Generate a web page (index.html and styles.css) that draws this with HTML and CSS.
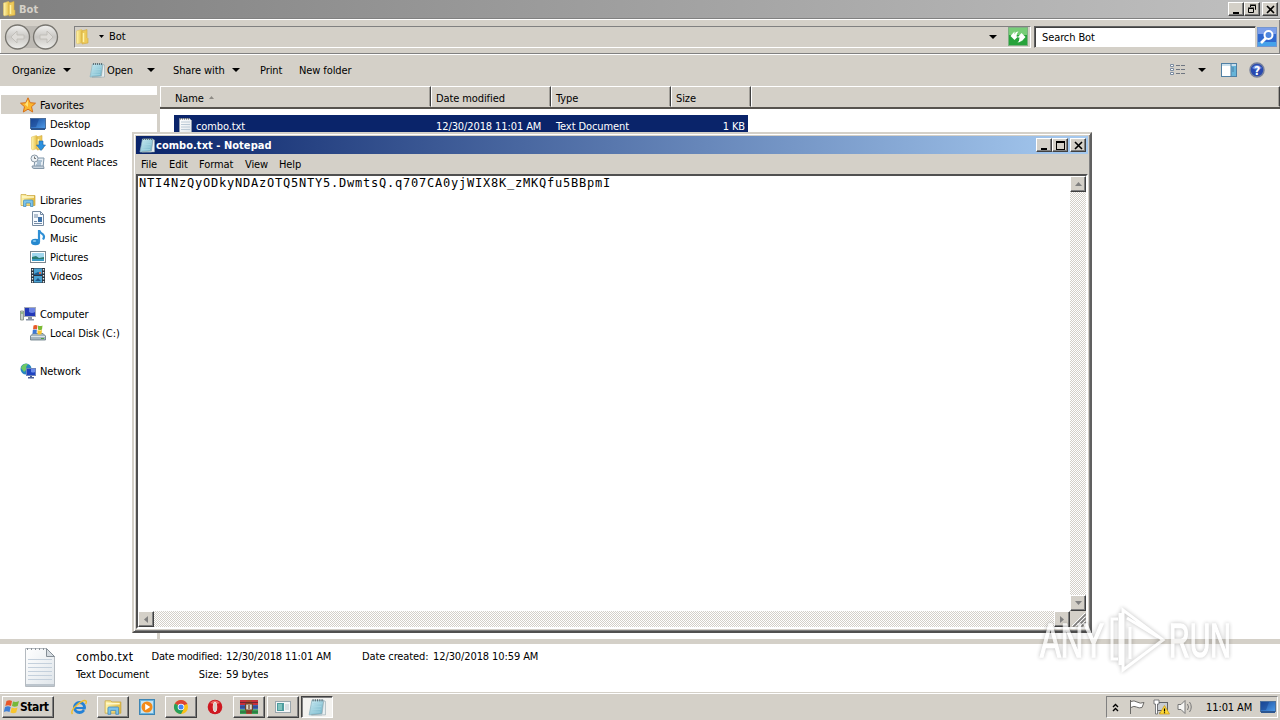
FILE: index.html
```
<!DOCTYPE html>
<html lang="en">
<head>
    <meta charset="UTF-8">
    <meta name="viewport" content="width=device-width, initial-scale=1.0">
    <title>Bot</title>
    <link rel="stylesheet" href="styles.css">
</head>
<body>
    <!-- shared icons -->
    <svg class="defs" width="0" height="0">
        <defs>
            <linearGradient id="gold" x1="0" x2="1"><stop offset="0" stop-color="#fff6b0"/><stop offset="1" stop-color="#e2b93c"/></linearGradient>
            <linearGradient id="screen" x1="0" y1="0" x2="1" y2="1"><stop offset="0" stop-color="#174a9c"/><stop offset="1" stop-color="#4f9be8"/></linearGradient>
            <linearGradient id="paper" x1="0" y1="0" x2="1" y2="1"><stop offset="0" stop-color="#fff"/><stop offset="1" stop-color="#dfe5ea"/></linearGradient>
            <linearGradient id="pad" x1="0" y1="0" x2="1" y2="1"><stop offset="0" stop-color="#d3f0f6"/><stop offset="1" stop-color="#67aec4"/></linearGradient>
            <linearGradient id="round" x1="0" y1="0" x2="0" y2="1"><stop offset="0" stop-color="#f2f2f0"/><stop offset=".5" stop-color="#c9c7c3"/><stop offset="1" stop-color="#efefec"/></linearGradient>
            <symbol id="folder" viewBox="0 0 16 16">
                <path d="M1.500 2l5-1.500 1 1v12l-5 1.500-1-1z" fill="url(#gold)" stroke="#e3c564" stroke-width=".6"/>
                <path d="M7 2l5-1.500v8l1 1v4.500l-6 1z" fill="#edca5b" stroke="#d0a83f" stroke-width=".6"/>
                <path d="M8.500 4v9" stroke="#fff3a5" stroke-width="1.500"/>
            </symbol>
            <symbol id="notepad" viewBox="0 0 16 16">
                <path d="M3.500 2H14l-1.500 13H1z" fill="url(#pad)" stroke="#8fb4c0" stroke-width=".7"/>
                <path d="M14 2.500l1.500.5v12H3l9.500-1z" fill="#e8f0f2" stroke="#8a9ea5" stroke-width=".5"/>
                <path d="M4 5h8M3.500 7.500h8.200M3 10h8.200M3 12.500h8" stroke="#a9d8e4" stroke-width=".7"/>
                <path d="M4.500 1v2M6.500 1v2M8.500 1v2M10.500 1v2M12.500 1v2" stroke="#4e5c63" stroke-width=".8"/>
            </symbol>
            <symbol id="explorer" viewBox="0 0 16 16">
                <path d="M1 2.500h5l1 1h8v10H1z" fill="url(#gold)" stroke="#c9a640" stroke-width=".7"/>
                <path d="M2 5h12" stroke="#fff8c9" stroke-width="1.500"/>
                <path d="M3.500 14.500V9q0-1 1-1h7.500q1 0 1 1v5.500h-2.500v-3.500H6v3.500z" fill="#7cc3ea" stroke="#4086b8" stroke-width=".7"/>
            </symbol>
            <symbol id="monitor" viewBox="0 0 16 16">
                <rect x=".5" y="2.500" width="15" height="10" fill="url(#screen)" stroke="#4c6f9c"/>
                <path d="M1 12h14v2H1z" fill="#2c5690"/><path d="M1 3h8l-3 8H1z" fill="#173f8b" opacity=".5"/>
            </symbol>
            <symbol id="txt" viewBox="0 0 16 16">
                <path d="M1.500.5h10l2 2v13h-12z" fill="url(#paper)" stroke="#9aa4ad" stroke-width=".6"/>
                <path d="M2 .8h10" stroke="#555" stroke-width="1.300" stroke-dasharray="1 1"/>
                <path d="M3 4h9M3 6.500h9M3 9h9M3 11.500h9" stroke="#bccad6"/>
            </symbol>
        </defs>
    </svg>

    <div class="explorer">
        <div class="title-bar inactive">
            <svg class="icon16"><use href="#folder"/></svg>
            <span class="title-text">Bot</span>
            <div class="win-buttons">
                <button class="win-btn"><svg width="13" height="11"><path d="M3 8h6v2H3z"/></svg></button>
                <button class="win-btn"><svg width="13" height="11" fill="none" stroke="#000"><path d="M4.500 3V1.500h5v4H9M4 1h6M2.500 4.500h5v4h-5zM2 4h6"/></svg></button>
                <button class="win-btn close"><svg width="13" height="11"><path d="M3 2l7 7M10 2l-7 7" stroke="#000" stroke-width="1.600"/></svg></button>
            </div>
        </div>

        <div class="address-row">
            <svg class="nav-buttons" width="62" height="30">
                <path d="M17 4h29q-10 11 0 22H17z" fill="#bdbab4"/>
                <g fill="url(#round)" stroke="#77756f" stroke-width="1.300">
                    <circle cx="15.500" cy="15" r="12"/><circle cx="43.500" cy="15" r="12"/>
                </g>
                <g fill="#dedcd8" stroke="#bebcb7" stroke-width=".9">
                    <path d="M9 15l6-6v4h7v4h-7v4z"/><path d="M51 15l-6-6v4h-7v4h7v4z"/>
                </g>
            </svg>
            <div class="address">
                <svg class="icon16"><use href="#folder"/></svg>
                <svg class="crumb-arrow" width="5" height="3"><path d="M0 0h5L2.500 3z"/></svg>
                <span>Bot</span>
                <svg class="drop" width="8" height="4"><path d="M0 0h8L4 4z"/></svg>
                <svg class="refresh" width="20" height="19">
                    <rect x=".5" y=".5" width="19" height="18" fill="#27a33b" stroke="#7eaf83"/>
                    <path d="M1 1h18v7H1z" fill="#77cd77"/>
                    <path d="M2.500 9l4-4.500v3q1-3 4-3-2 1.500-2 5h1.500L6.500 13z" fill="#fff"/>
                    <path d="M17.500 10l-4 4.500v-1q-1 2-4 2 2-1.500 2-5H9.500L13.500 6z" fill="#fff"/>
                </svg>
            </div>
            <div class="search">Search Bot</div>
            <svg class="search-btn" width="20" height="20">
                <rect x=".5" y=".5" width="19" height="19" fill="#2f68cf" stroke="#7596cf"/>
                <path d="M1 1h18v6H1z" fill="#7c9fe9"/><path d="M1 15h18v4H1z" fill="#46a2ea"/>
                <circle cx="11.500" cy="8" r="4" fill="#4d86df" stroke="#fff" stroke-width="2"/>
                <path d="M9 11l-5 5" stroke="#fff" stroke-width="2.600"/>
            </svg>
        </div>

        <div class="toolbar">
            <span class="tool organize">Organize</span>
            <svg class="drop d1" width="8" height="4"><path d="M0 0h8L4 4z"/></svg>
            <svg class="icon16"><use href="#notepad"/></svg>
            <span class="tool open">Open</span>
            <svg class="drop d2" width="8" height="4"><path d="M0 0h8L4 4z"/></svg>
            <span class="tool share">Share with</span>
            <svg class="drop d3" width="8" height="4"><path d="M0 0h8L4 4z"/></svg>
            <span class="tool print">Print</span>
            <span class="tool">New folder</span>
            <div class="view-tools">
                <svg width="16" height="14" fill="none">
                    <path d="M.5 1.500h3v2h-3zM.5 5.500h3v2h-3zM.5 9.500h3v2h-3z" fill="#fff" stroke="#7a8ba0"/>
                    <path d="M6 2.500h4M11 2.500h4M6 6.500h4M11 6.500h4M6 10.500h4M11 10.500h4" stroke="#6f7681"/>
                </svg>
                <svg width="8" height="4"><path d="M0 0h8L4 4z"/></svg>
                <svg width="16" height="14">
                    <rect x=".5" y=".5" width="15" height="13" fill="#fff" stroke="#4f7fa4"/>
                    <path d="M1 1h14v2H1z" fill="#c9e0ee"/><path d="M10 3h5v10h-5z" fill="#66b4d8"/><path d="M10 1v12M12 4v5" stroke="#4f7fa4"/>
                </svg>
                <svg width="16" height="16">
                    <circle cx="8" cy="8" r="7" fill="#2849b0" stroke="#77819c" stroke-width="1.500"/>
                    <path d="M3 6q5-6 10 0-5 3-10 0" fill="#6f8fe0"/>
                    <text class="help-mark" x="8" y="12.500">?</text>
                </svg>
            </div>
        </div>

        <div class="main">
            <div class="nav-pane">
                <div class="nav-item root selected">
                    <svg class="icon16" viewBox="0 0 16 16"><path d="M8 .8l2.200 4.900 5.300.5-4 3.500 1.200 5.300L8 12.200 3.300 15l1.200-5.300-4-3.500 5.300-.5z" fill="#fcb72d" stroke="#d66f18"/><path d="M8 3v7l-3-2.500z" fill="#ffe27a"/></svg><span>Favorites</span></div>
                <div class="nav-item"><svg class="icon16"><use href="#monitor"/></svg><span>Desktop</span></div>
                <div class="nav-item">
                    <svg class="icon16"><use href="#folder"/><path d="M9 6h4v4h2.500L11 15.500 6.500 10H9z" fill="#2b91df" stroke="#1b65ab" stroke-width=".6"/></svg><span>Downloads</span></div>
                <div class="nav-item">
                    <svg class="icon16"><path d="M5 4h9l-1 9.500H4z" fill="#e6edf3" stroke="#7f95a8"/><path d="M7 7h5M7 9h4M6 11h5" stroke="#6f92b0"/><path d="M2 12h11q1 0 1 2.500H4q-2 0-2-2.500" fill="#c7d3de" stroke="#8497a8"/><circle cx="4.500" cy="4.500" r="3.500" fill="#eef3f6" stroke="#8a98a5"/><path d="M4.500 2.500v2H6" fill="none" stroke="#555" stroke-width=".8"/></svg><span>Recent Places</span></div>
                <div class="nav-item root group"><svg class="icon16"><use href="#explorer"/></svg><span>Libraries</span></div>
                <div class="nav-item">
                    <svg class="icon16"><path d="M2.500.5h8l3 3v11h-11z" fill="#f7fbff" stroke="#768aa0"/><path d="M10.500.5v3h3M4 4h4M4 6h4M4 12.500h8M4 10.500h3" fill="none" stroke="#7389a3"/><path d="M8 6h4v5H8z" fill="#3f73aa"/></svg><span>Documents</span></div>
                <div class="nav-item">
                    <svg class="icon16"><ellipse cx="5.500" cy="12" rx="4.500" ry="3.300" fill="#2588cf"/><path d="M9 12V0q1 3 4 4.500 2 2 0 5" fill="none" stroke="#2f8fd5" stroke-width="2.200"/><ellipse cx="4.500" cy="11" rx="1.800" ry="1.100" fill="#80c4ee"/></svg><span>Music</span></div>
                <div class="nav-item">
                    <svg class="icon16"><rect x=".5" y="2.500" width="15" height="11" fill="#fff" stroke="#7a8790"/><path d="M2 4h12v8H2z" fill="#a1d7ee"/><path d="M2 8l4-1 3 2 5-1v2H2z" fill="#2b7d72"/><path d="M2 10h12v2H2z" fill="#3a9ac4"/></svg><span>Pictures</span></div>
                <div class="nav-item">
                    <svg class="icon16"><path d="M1 0h14v15H1z" fill="#2b3540"/><path d="M4 .5h8v6.500H4zM4 8h8v6.500H4z" fill="#4aa2d2"/><path d="M4 6l4-2 4 2v1H4zM5 13l3-3 3 3z" fill="#1d5789"/><path d="M2.500 1v14M13.500 1v14" stroke="#e8eef2" stroke-width="1.300" stroke-dasharray="1.500 1.500"/><path d="M9 4h2v2H9z" fill="#dc6b4b"/></svg><span>Videos</span></div>
                <div class="nav-item root group">
                    <svg class="icon16"><path d="M.5 5h3v9h-3z" fill="#c9d2c8" stroke="#7d897d" stroke-width=".8"/><path d="M1 7h2" stroke="#58a34b"/><rect x="4.500" y="1.500" width="11" height="9" fill="#2238b8" stroke="#a5abb8"/><path d="M9 2h6v4q-3 2-6 0z" fill="#6a82e4"/><path d="M8 11h4v2h2v1.500H6V13h2z" fill="#8893a5"/></svg><span>Computer</span></div>
                <div class="nav-item">
                    <svg class="icon16"><path d="M3 8.500h10l2.500 2.500v4H.5v-4z" fill="#a4b4bd" stroke="#657984" stroke-width=".8"/><path d="M1 11.500h14" stroke="#dbe4e8"/><path d="M11 13.500h3" stroke="#50a343"/><path d="M3.500.5q2-1 4 0L7 4.500q-2-1-4 0z" fill="#e75a27"/><path d="M8 .5q2 1 4.500 0L12 4.500q-2 1-4 0z" fill="#7cba34"/><path d="M2.800 5q2-1 4 0L6.500 9q-2-1-4 0z" fill="#3c78d4"/><path d="M7.500 5q2 1 4.500 0l-.5 4q-2 1-4 0z" fill="#f8c32c"/></svg><span>Local Disk (C:)</span></div>
                <div class="nav-item root group">
                    <svg class="icon16"><circle cx="6" cy="6" r="5.500" fill="#2785c1"/><path d="M1 5q2-5 7-4L6 4l1 2-3 3zM8 7l3-2v3z" fill="#6fca64"/><rect x="6.500" y="5.500" width="9" height="7" fill="#1d42c0" stroke="#6e83bb"/><path d="M11 6h4v3q-2 1-4 0z" fill="#698bea"/><path d="M10 13h2v1h2v1.500H8V14h2z" fill="#4a5f96"/></svg><span>Network</span></div>
            </div>
            <div class="pane-split"></div>
            <div class="file-list">
                <div class="columns">
                    <div class="col name">Name <svg class="sort" width="5" height="3"><path d="M0 3h5L2.500 0z" fill="#8d8a84"/></svg></div>
                    <div class="col date">Date modified</div>
                    <div class="col type">Type</div>
                    <div class="col size">Size</div>
                    <div class="col rest"></div>
                </div>
                <div class="file-row">
                    <svg class="icon16"><use href="#txt"/></svg>
                    <span class="f-name">combo.txt</span>
                    <span class="f-date">12/30/2018 11:01 AM</span>
                    <span class="f-type">Text Document</span>
                    <span class="f-size">1 KB</span>
                </div>
            </div>
        </div>

        <div class="details">
            <svg class="doc-icon" width="32" height="42">
                <path d="M1.500 2.500h21l8 8v30h-29z" fill="url(#paper)" stroke="#b4bac0"/>
                <path d="M22.500 2.500v8h8z" fill="#d6dce1" stroke="#858e96"/>
                <path d="M3 3h18" stroke="#8b9298" stroke-width="2" stroke-dasharray="1 3"/>
                <path d="M4 13.500h24M4 17.500h24M4 21.500h24M4 25.500h24M4 29.500h24M4 33.500h24" stroke="#c4d0dc"/>
                <path d="M2 38h28v2H2z" fill="#bcc5cd"/>
            </svg>
            <div class="detail-col d-name"><span class="big">combo.txt</span><span>Text Document</span></div>
            <div class="detail-col d-labels"><span class="tight">Date modified:</span><span>Size:</span></div>
            <div class="detail-col d-values"><span>12/30/2018 11:01 AM</span><span>59 bytes</span></div>
            <div class="detail-col d-created"><span>Date created:</span></div>
            <div class="detail-col"><span>12/30/2018 10:59 AM</span></div>
        </div>
    </div>

    <div class="taskbar">
        <button class="start">
            <svg width="17" height="16"><path d="M3.500 2q3-1.500 5.500 0L8 7Q5 5.500 2.300 7z" fill="#e8572a"/><path d="M10 2.500q3 1 6-.5l-1.300 5q-3 1.500-5.700 0z" fill="#76b83a"/><path d="M2 8q3-1.500 5.700 0l-1.200 5Q3.500 11.500.8 13z" fill="#3f7fd6"/><path d="M8.700 8.500q3 1.500 5.800 0l-1.300 5q-3 1.500-5.700 0z" fill="#f8c52e"/></svg>
            <span>Start</span>
        </button>
        <div class="task flat">
            <svg class="icon16"><circle cx="8.500" cy="8.500" r="5" fill="none" stroke="#2481d6" stroke-width="3"/><path d="M4 8h10v2H4z" fill="#2481d6"/><path d="M12 10.500h4V13z" fill="#d4d0c8"/><path d="M1.500 15Q-1 12 6 6q7-6 9-4 1 1-.5 3" fill="none" stroke="#f0bd2c" stroke-width="1.500"/></svg>
        </div>
        <div class="task raised"><svg width="18" height="18" viewBox="0 0 16 16"><use href="#explorer"/></svg></div>
        <div class="task flat">
            <svg class="icon16"><rect x=".5" y=".5" width="15" height="15" fill="#69b3de" stroke="#3d85b4"/><path d="M2 2h12v12H2z" fill="#c6e3f1"/><circle cx="8" cy="8" r="5.500" fill="#f28a19"/><path d="M6.200 4.800l5 3.200-5 3.200z" fill="#fff"/></svg>
        </div>
        <div class="task raised">
            <svg class="icon16"><circle cx="8" cy="8" r="7" fill="#fbc116"/><path d="M8 8L1.900 4.500A7 7 0 0 1 14.100 4.500z" fill="#db4437"/><path d="M8 8L1.900 4.500A7 7 0 0 0 8 15l3-5.500z" fill="#26a05b"/><path d="M8 4.700h6.200" stroke="#db4437"/><circle cx="8" cy="8" r="3.300" fill="#fff"/><circle cx="8" cy="8" r="2.500" fill="#4285f4"/></svg>
        </div>
        <div class="task flat">
            <svg class="icon16"><circle cx="8" cy="8" r="7.300" fill="#ce1820"/><path d="M3 4q5-5 10 0-5 2-10 0" fill="#eb6c67"/><ellipse cx="8" cy="8" rx="1.800" ry="5" fill="#d4d0c8" stroke="#f7e8e6" stroke-width=".8"/></svg>
        </div>
        <div class="task raised">
            <svg width="18" height="16" viewBox="0 0 16 16" preserveAspectRatio="none"><path d="M0 1h16v5H0z" fill="#c8303a"/><path d="M0 6h16v4.500H0z" fill="#3c62b8"/><path d="M0 10.500h16V15H0z" fill="#35a352"/><path d="M5.500 1h5v14h-5z" fill="#b0432b"/><path d="M0 3.500h16M0 8h16M0 13h16" stroke="#241d2a" stroke-width=".5"/><path d="M5 5h6v6H5z" fill="#ded7c8" stroke="#6b4020"/><path d="M8 6v4" stroke="#5f3a20"/></svg>
        </div>
        <div class="task raised">
            <svg class="icon16"><rect x=".5" y="2.500" width="15" height="11" fill="#f4f6f7" stroke="#9aa6ac"/><path d="M2 4h7v8H2z" fill="#4c9b9e"/><path d="M3 5h4v6H3z" fill="#80c2bc"/><path d="M10 5h4v6h-4z" fill="#d9dfe2"/></svg>
        </div>
        <div class="task pressed"><svg width="18" height="18" viewBox="0 0 16 16"><use href="#notepad"/></svg></div>

        <div class="tray">
            <svg class="chevrons" width="7" height="9" fill="none" stroke="#000" stroke-width="1.400"><path d="M1 4l2.500-2.500L6 4M1 8l2.500-2.500L6 8"/></svg>
            <svg class="flag" width="16" height="16"><path d="M1.500 1v14M2 2.500q3-1.500 6 .5t7 .5l-2 5q-3 1-5.500-.5T2 8.500" fill="#fff" stroke="#6b6a67"/></svg>
            <svg class="net" width="17" height="16"><rect x="4.500" y="3.500" width="10" height="8" fill="#c8ccd0" stroke="#5f6266"/><path d="M1 1h5v4H4.500v10h-2V5H1z" fill="#fff" stroke="#5f6266" stroke-width=".8"/><path d="M6 14h5" stroke="#5f6266"/><path d="M11.500 6.500l5 8.500h-10z" fill="#ffd935" stroke="#c99712" stroke-width=".7"/><path d="M11.500 9.500v3M11.500 13.300v1" stroke="#000" stroke-width="1.200"/></svg>
            <svg class="sound" width="17" height="16"><path d="M1 5.500h3l4-4v13l-4-4H1z" fill="#f7f7f5" stroke="#777"/><path d="M10.500 5q2 3 0 6M12.500 3q3.500 5 0 10" fill="none" stroke="#777"/></svg>
            <span class="clock">11:01 AM</span>
            <svg class="icon16"><use href="#monitor"/></svg>
        </div>
    </div>

    <div class="notepad">
        <div class="title-bar active">
            <svg class="icon16"><use href="#notepad"/></svg>
            <span class="title-text">combo.txt - Notepad</span>
            <div class="win-buttons">
                <button class="win-btn"><svg width="13" height="11"><path d="M3 8h6v2H3z"/></svg></button>
                <button class="win-btn"><svg width="13" height="11"><path d="M2 1h9v9H2zM3 3v6h7V3z" fill-rule="evenodd"/></svg></button>
                <button class="win-btn close"><svg width="13" height="11"><path d="M3 2l7 7M10 2l-7 7" stroke="#000" stroke-width="1.600"/></svg></button>
            </div>
        </div>
        <div class="menu">
            <span class="m-file">File</span><span class="m-edit">Edit</span><span class="m-format">Format</span><span class="m-view">View</span><span>Help</span>
        </div>
        <div class="edit">
            <div class="text">NTI4NzQyODkyNDAzOTQ5NTY5.DwmtsQ.q707CA0yjWIX8K_zMKQfu5BBpmI</div>
            <div class="scroll vertical">
                <div class="scroll-btn"><svg width="7" height="4"><path d="M0 4h7L3.500 0z" fill="#808080"/></svg></div>
                <div class="scroll-btn"><svg width="7" height="4"><path d="M0 0h7L3.500 4z" fill="#808080"/></svg></div>
            </div>
            <div class="scroll horizontal">
                <div class="scroll-btn"><svg width="4" height="7"><path d="M4 0v7L0 3.500z" fill="#808080"/></svg></div>
                <div class="scroll-btn"><svg width="4" height="7"><path d="M0 0v7l4-3.500z" fill="#808080"/></svg></div>
            </div>
            <svg class="grip" width="16" height="16"><path d="M3 16L16 3M7 16l9-9M11 16l5-5" stroke="#808080" stroke-width="1.600"/><path d="M2 15L15 2M6 15l9-9M10 15l5-5" stroke="#fff"/></svg>
        </div>
    </div>

    <div class="watermark">
        <svg width="216" height="72" fill="none" stroke="#fff" stroke-width="3">
            <text class="wm-text" x="3" y="53" textLength="64" lengthAdjust="spacingAndGlyphs">ANY</text>
            <path d="M81 15h-6v40h6M83 9v52M86 61v5l40-30L86 6v55M90 14l31 19M93 55V23"/>
            <text class="wm-text" x="132" y="53" textLength="62" lengthAdjust="spacingAndGlyphs">RUN</text>
        </svg>
    </div>
</body>
</html>
```
FILE: styles.css
```
* {
    box-sizing: border-box;
}

body {
    margin: 0;
    width: 1280px;
    height: 720px;
    overflow: hidden;
    position: relative;
    display: flex;
    flex-direction: column;
    background: #d4d0c8;
    color: #000;
    font-family: "DejaVu Sans Condensed", "DejaVu Sans", sans-serif;
    font-stretch: condensed;
    font-size: 11px;
    line-height: 14px;
    letter-spacing: -0.1px;
    white-space: nowrap;
}

svg {
    display: block;
    flex: none;
}

.defs {
    position: absolute;
}

button {
    font: inherit;
    letter-spacing: inherit;
    color: inherit;
    padding: 0;
    margin: 0;
}

.icon16 {
    width: 16px;
    height: 16px;
}

/* Title bars */
.title-bar {
    display: flex;
    align-items: center;
    height: 18px;
    flex: none;
    font-weight: bold;
}

.title-bar.inactive {
    padding: 0 2px;
    background: linear-gradient(to right, #808080, #c0c0c0);
    color: #d4d0c8;
}

.title-bar.active {
    padding: 0 2px 0 3px;
    background: linear-gradient(to right, #0a246a, #a6caf0);
    color: #fff;
}

.title-text {
    margin-left: 1px;
    padding-top: 2px;
    letter-spacing: 0.04px;
}

.win-buttons {
    display: flex;
    margin-left: auto;
}

.win-btn, .scroll-btn {
    width: 16px;
    height: 14px;
    display: flex;
    align-items: center;
    justify-content: center;
    background: #d4d0c8;
    border: 1px solid;
    border-color: #fff #404040 #404040 #fff;
    box-shadow: inset -1px -1px #808080;
}

.win-btn.close {
    margin-left: 2px;
}

/* Explorer */
.explorer {
    height: 692px;
    display: flex;
    flex-direction: column;
}

.address-row {
    height: 36px;
    display: flex;
    align-items: center;
    border-top: 1px solid #808080;
    border-bottom: 1px solid #808080;
    box-shadow: inset 1px 1px #fff, inset -1px 0 #808080, 0 1px #fff;
    padding: 1px 2px 0 2px;
}

.nav-buttons {
    margin-right: 10px;
}

.address {
    width: 957px;
    height: 22px;
    display: flex;
    align-items: center;
    border: 1px solid;
    border-color: #808080 #fff #fff #808080;
    padding-right: 2px;
}

.crumb-arrow {
    margin: 0 5px 0 8px;
}

.address .drop {
    margin-left: auto;
    margin-right: 11px;
}

.search {
    width: 222px;
    height: 22px;
    margin-left: 3px;
    padding: 4px 7px;
    line-height: 13px;
    background: #fff;
    border: 1px solid;
    border-color: #606060 #d4d0c8 #d4d0c8 #606060;
    box-shadow: inset 1px 1px #404040;
}

.search-btn {
    margin-left: 1px;
}

.toolbar {
    height: 32px;
    display: flex;
    align-items: center;
    padding: 0 15px 0 12px;
}

.tool {
    padding-top: 1px;
}

.organize { width: 51px; }
.d1 { margin-right: 18px; }
.open { width: 40px; margin-left: 2px; }
.d2 { margin-right: 18px; }
.share { width: 59px; }
.d3 { margin-right: 20px; }
.print { width: 39px; }

.view-tools {
    display: flex;
    align-items: center;
    margin-left: auto;
}

.view-tools svg:nth-child(1) { margin-right: 12px; }
.view-tools svg:nth-child(2) { margin-right: 15px; }
.view-tools svg:nth-child(3) { margin-right: 12px; }

.help-mark {
    font-weight: bold;
    font-size: 12px;
    text-anchor: middle;
    fill: #fff;
}

.main {
    flex: 1;
    display: flex;
    min-height: 0;
}

.nav-pane {
    width: 157px;
    padding: 9px 0 0 1px;
    background: #fff;
}

.nav-item {
    height: 19px;
    display: flex;
    align-items: center;
    gap: 4px;
    padding-left: 29px;
}

.nav-item span {
    padding-top: 2px;
}

.nav-item.root {
    padding-left: 19px;
}

.nav-item.group {
    margin-top: 19px;
}

.nav-item.selected {
    background: #d4d0c8;
}

.pane-split {
    width: 3px;
    background: #d4d0c8;
}

.file-list {
    flex: 1;
    background: #fff;
}

.columns {
    display: flex;
    height: 23px;
    background: #d4d0c8;
    border-bottom: 2px solid #56534e;
}

.col {
    display: flex;
    align-items: center;
    padding: 4px 0 0 4px;
    border: 1px solid;
    border-color: #fff #404040 transparent #fff;
    box-shadow: inset -1px 0 #a09d97;
}

.col.name { width: 271px; padding-left: 14px; }
.col.date { width: 120px; }
.col.type { width: 120px; }
.col.size { width: 80px; }
.col.rest { flex: 1; }

.sort {
    margin: 0 0 3px 5px;
}

.file-row {
    width: 574px;
    height: 20px;
    margin: 6px 0 0 14px;
    padding: 2px 3px 0 4px;
    display: flex;
    align-items: center;
    background: #0a246a;
    color: #fff;
}

.file-row span {
    padding-top: 2px;
}

.f-name { width: 240px; margin-left: 2px; }
.f-date { width: 120px; }
.f-type { width: 120px; }
.f-size { margin-left: auto; }

/* Details pane */
.details {
    height: 53px;
    display: flex;
    padding: 6px 0 0 24px;
    background: #fff;
    border-top: 5px solid #d4d0c8;
}

.doc-icon {
    margin-top: -4px;
}

.detail-col {
    display: flex;
    flex-direction: column;
    gap: 4px;
}

.detail-col .big {
    font-size: 12px;
    letter-spacing: 0.3px;
}

.detail-col .tight {
    letter-spacing: -0.22px;
}

.d-name { margin-left: 20px; width: 76px; }
.d-labels { width: 70px; align-items: flex-end; }
.d-values { margin-left: 4px; width: 136px; }
.d-created { width: 71px; }

/* Taskbar */
.taskbar {
    height: 28px;
    display: flex;
    align-items: center;
    padding: 1px 2px 0;
    background: #d4d0c8;
    border-top: 1px solid #d4d0c8;
    box-shadow: inset 0 1px #fff;
}

.start {
    width: 52px;
    height: 22px;
    display: flex;
    align-items: center;
    background: #d4d0c8;
    border: 1px solid;
    border-color: #fff #404040 #404040 #fff;
    box-shadow: inset -1px -1px #808080;
    font-weight: bold;
    font-size: 12px;
    letter-spacing: -0.42px;
    margin-right: 9px;
}

.task {
    height: 22px;
    width: 32px;
    margin-right: 2px;
    display: flex;
    align-items: center;
    justify-content: center;
}

.task.raised {
    border: 1px solid;
    border-color: #fff #404040 #404040 #fff;
    box-shadow: inset -1px -1px #808080;
}

.task.pressed {
    background: #f3f2ef;
    border: 1px solid;
    border-color: #404040 #fff #fff #404040;
    box-shadow: inset 1px 1px #808080;
}

.tray {
    height: 22px;
    width: 172px;
    margin-left: auto;
    display: flex;
    align-items: center;
    padding-left: 5px;
    border: 1px solid;
    border-color: #808080 #fff #fff #808080;
}

.chevrons { margin-right: 10px; }
.flag { margin-right: 8px; }
.net { margin-right: 7px; }
.clock { margin-left: 12px; width: 54px; padding-top: 1px; }

/* Notepad window */
.notepad {
    position: absolute;
    left: 132px;
    top: 132px;
    width: 960px;
    height: 501px;
    padding: 2px;
    display: flex;
    flex-direction: column;
    background: #d4d0c8;
    border: 2px solid;
    border-color: #d4d0c8 #606060 #505050 #d4d0c8;
    box-shadow: inset 1px 1px #fff, inset -1px -1px #808080;
}

.menu {
    height: 20px;
    display: flex;
    align-items: center;
    padding: 1px 0 0 5px;
}

.m-file { width: 28px; }
.m-edit { width: 30px; }
.m-format { width: 46px; }
.m-view { width: 34px; }

.edit {
    flex: 1;
    display: grid;
    grid-template-columns: 1fr 16px;
    grid-template-rows: 1fr 16px;
    border: 2px solid;
    border-color: #505050 #fff #fff #505050;
    background: #fff;
}

.text {
    padding: 0 1px;
    font-family: "DejaVu Sans Mono", monospace;
    font-size: 12px;
    letter-spacing: 0.776px;
}

.scroll {
    display: flex;
    justify-content: space-between;
    background: repeating-conic-gradient(#d4d0c8 0 25%, #fff 0 50%) 0 0 / 2px 2px;
}

.scroll.vertical {
    flex-direction: column;
}

.scroll-btn {
    width: 16px;
    height: 16px;
}

.grip {
    background: #d4d0c8;
}

/* Watermark */
.watermark {
    position: absolute;
    left: 1037px;
    top: 604px;
    opacity: 0.75;
    filter: drop-shadow(0 0 2px rgba(0, 0, 0, 0.35));
}

.wm-text {
    fill: #fff;
    stroke-width: 1.5;
    font-family: "Liberation Sans", sans-serif;
    font-size: 49px;
    letter-spacing: 0;
}
```
